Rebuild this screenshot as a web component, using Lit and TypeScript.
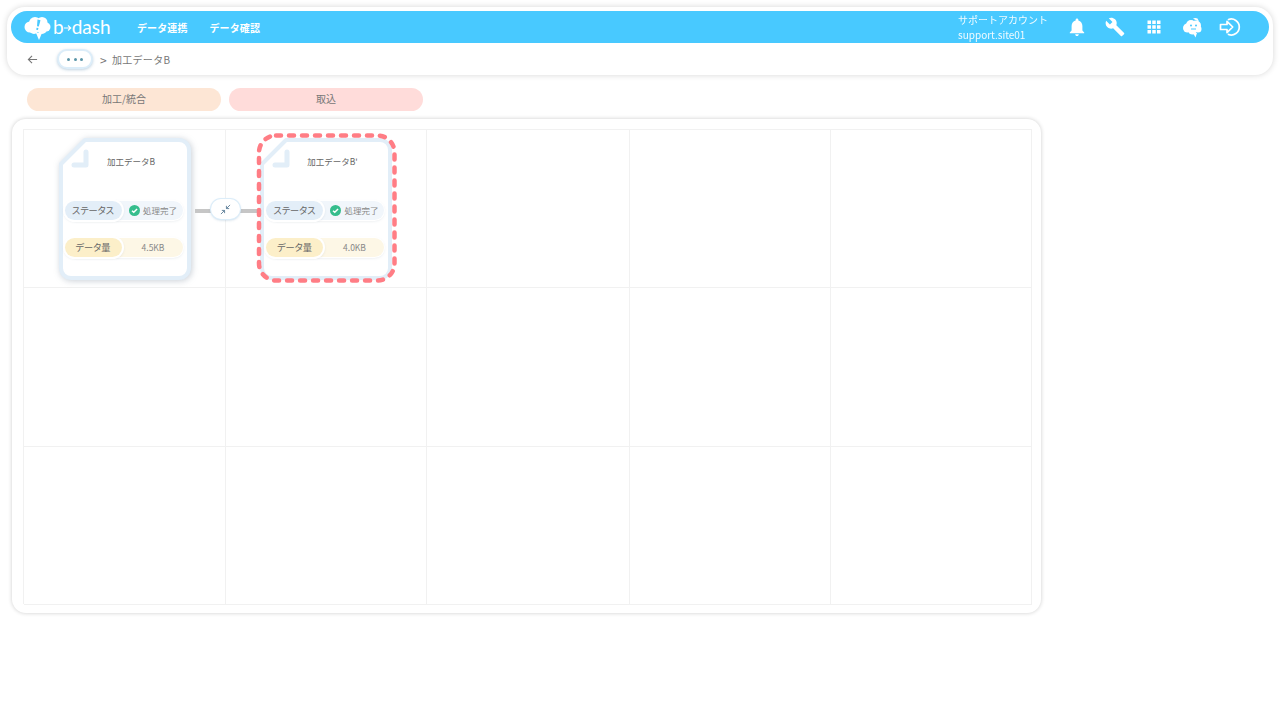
import { LitElement, html, css, svg } from "lit";
import { customElement } from "lit/decorators.js";

const shapePath = "M26 2 H120 A10 10 0 0 1 130 12 V130 A10 10 0 0 1 120 140 H12 A10 10 0 0 1 2 130 V26 Z";

@customElement("data-node")
class DataNode extends LitElement {
  static properties = { title: {}, size: {}, selected: { type: Boolean } };
  declare title: string;
  declare size: string;
  declare selected: boolean;
  static styles = css`
    :host { display: block; position: relative; width: 132px; height: 142px; }
    .wrap { height: 100%; }
    .shape { position: absolute; inset: 0; width: 132px; height: 142px; overflow: visible; filter: drop-shadow(1px 1px 3px rgba(90,110,130,.32)); }
    .selected .shape { filter: none; }
    .body { position: relative; height: 100%; box-sizing: border-box; padding: 17px 8px 0 5px; display: flex; flex-direction: column; }
    .name { font-size: 8.5px; line-height: 12px; color: #666; text-align: center; padding-left: 16px; height: 12px; }
    .row { display: flex; align-items: center; height: 19px; border-radius: 10px; background: #f1f6fb; box-shadow: 0 0 0 1px #fff, 0 1px 3px rgba(100,120,140,.2); font-size: 10px; color: #888; }
    .row.status { margin-top: 34px; }
    .row.amount { margin-top: 18px; background: #fdf7e6; }
    .label { width: 57px; margin-left: 1px; height: 19px; line-height: 18px; font-size: 9.2px; border-radius: 10px; text-align: center; background: #e3eef8; box-shadow: 0 0 0 2px #fff, 1px 1px 3px rgba(100,120,140,.3); color: #666; flex: none; font-feature-settings: "palt"; }
    .amount .label { background: #fcefc9; }
    .value { flex: 1; display: flex; align-items: center; justify-content: center; gap: 3px; font-size: 8.5px; padding-left: 2px; }
    .value svg { width: 11px; height: 11px; }
    .dash { position: absolute; left: -5px; top: -5px; width: 142px; height: 152px; overflow: visible; }
  `;
  render() {
    return html`<div class="wrap ${this.selected ? "selected" : ""}">
      <svg class="shape" viewBox="0 0 132 142">
        <path d=${shapePath} fill="#fff" stroke="#e2eef8" stroke-width="4" stroke-linejoin="round"></path>
        <path d="M27 14 V27 H15" fill="none" stroke="#e2eef8" stroke-width="5" stroke-linejoin="round" stroke-linecap="round"></path>
      </svg>
      <div class="body">
        <div class="name">${this.title}</div>
        <div class="row status">
          <div class="label">ステータス</div>
          <div class="value">
            <svg viewBox="0 0 12 12"><circle cx="6" cy="6" r="6" fill="#35bd8d"></circle><path d="M3.3 6.2 5.2 8 8.8 4.4" fill="none" stroke="#fff" stroke-width="1.6"></path></svg>
            処理完了
          </div>
        </div>
        <div class="row amount">
          <div class="label">データ量</div>
          <div class="value">${this.size}</div>
        </div>
      </div>
      ${this.selected ? html`<svg class="dash" viewBox="0 0 142 152"><rect x="4" y="2.5" width="135.5" height="145" rx="17" fill="none" stroke="#ff7d85" stroke-width="4.5" stroke-dasharray="5 8" stroke-linecap="round"></rect></svg>` : ""}
    </div>`;
  }
}

@customElement("app-root")
class AppRoot extends LitElement {
  static styles = css`
    :host { display: block; width: 1280px; height: 720px; background: #fff; overflow: hidden; font-family: "Noto Sans CJK JP", "Noto Sans", sans-serif; box-sizing: border-box; padding: 7px 7px 0; }
    .top { height: 68px; box-sizing: border-box; padding: 4px; border-radius: 18px; background: #fff; box-shadow: 0 0 6px rgba(0,0,0,.16); }
    .bar { height: 32px; border-radius: 16px; background: #48c9ff; display: flex; align-items: center; color: #fff; padding-left: 12px; }
    .logo { display: flex; align-items: center; width: 114px; flex: none; }
    .logo svg.mark { width: 28px; height: 24px; flex: none; margin-top: 1px; }
    .brand { font-family: "Lato", sans-serif; font-size: 19px; line-height: 22px; margin-left: 2px; display: flex; align-items: center; }
    .brand svg { width: 8px; height: 8px; margin: 2px 0 0; }
    nav { display: flex; gap: 22px; font-size: 10px; font-weight: 700; letter-spacing: .1px; }
    .spacer { flex: 1; }
    .user { width: 107px; font-size: 10px; line-height: 15px; opacity: .92; }
    .icons { display: flex; align-items: center; justify-content: space-between; width: 177px; margin-right: 27px; }
    .icons svg { width: 24px; height: 24px; fill: #fff; }
    .crumbs { display: flex; align-items: center; height: 28px; margin-top: 2px; padding-left: 16px; color: #777; font-size: 10px; letter-spacing: .3px; }
    .crumbs > svg { width: 11px; height: 11px; flex: none; }
    .more { width: 36px; height: 20px; box-sizing: border-box; margin: 0 7px 0 19px; border-radius: 10px; border: 2px solid #dcedf9; background: #fff; box-shadow: 0 1px 3px rgba(80,130,170,.35); display: flex; align-items: center; justify-content: center; gap: 3.5px; }
    .more i { width: 3px; height: 3px; border-radius: 50%; background: #5a95a8; }
    .sep { margin-right: 5px; font-size: 12px; }
    .tabs { display: flex; gap: 8px; margin: 13px 0 0 20px; }
    .tab { width: 194px; height: 23px; border-radius: 12px; background: #fde6d5; color: #777; font-size: 10px; line-height: 22px; text-align: center; }
    .tab.in { background: #ffdcda; }
    .canvas { position: relative; width: 1029px; height: 494px; box-sizing: border-box; margin: 8px 0 0 5px; padding: 10px 10px 9px 11px; border-radius: 14px; background: #fff; box-shadow: 0 0 4px rgba(0,0,0,.2); }
    .grid { display: grid; grid-template-columns: 202px 201px 203px 201px 201px; grid-template-rows: 158px 159px 158px; height: 475px; border: 1px solid #f1f1f1; border-width: 1px 0 0 1px; box-sizing: border-box; width: 1009px; }
    .cell { border: 1px solid #f1f1f1; border-width: 0 1px 1px 0; display: flex; align-items: center; justify-content: center; position: relative; }
    .link { position: absolute; left: 171px; top: 70px; width: 64px; height: 22px; }
    .link .line { position: absolute; left: 0; top: 9px; width: 64px; height: 4px; background: #c6c6c6; }
    .link .btn { position: absolute; left: 16px; top: -1px; width: 29px; height: 20px; box-sizing: border-box; border-radius: 10px; background: #fff; box-shadow: 0 0 0 1px #dcedf9, 0 1px 3px rgba(80,130,170,.4); display: flex; align-items: center; justify-content: center; }
    .link svg { width: 11px; height: 11px; }
  `;
  render() {
    const blue = "#48c9ff";
    const icons = [
      svg`<path transform="translate(1.200 1.200) scale(.9)" d="M12 22c1.100 0 2-.9 2-2h-4c0 1.100.89 2 2 2zm6-6v-5c0-3.070-1.640-5.640-4.500-6.320V4c0-.83-.67-1.500-1.500-1.500s-1.500.67-1.500 1.500v.68C7.630 5.360 6 7.920 6 11v5l-2 2v1h16v-1l-2-2z"></path>`,
      svg`<path transform="translate(1.800 1.800) scale(.85)" d="M22.700 19l-9.100-9.100c.9-2.300.4-5-1.500-6.900-2-2-5-2.400-7.400-1.300L9 6 6 9 1.600 4.700C.4 7.100.9 10.100 2.900 12.100c1.900 1.900 4.600 2.400 6.900 1.500l9.100 9.100c.4.4 1 .4 1.400 0l2.300-2.300c.5-.4.5-1.100.1-1.400z"></path>`,
      svg`<path d="M5.500 5.500h3.500v3.500H5.500zM10.250 5.500h3.500v3.500h-3.500zM15 5.500h3.500v3.500H15zM5.500 10.250h3.500v3.500H5.500zM10.250 10.250h3.500v3.500h-3.500zM15 10.250h3.500v3.500H15zM5.500 15h3.500v3.500H5.500zM10.250 15h3.500v3.500h-3.500zM15 15h3.500v3.500H15z"></path>`,
      svg`<circle cx="7.500" cy="13" r="4.500"></circle><circle cx="11" cy="10" r="5"></circle><circle cx="16" cy="10.500" r="5"></circle><circle cx="18" cy="14" r="3.500"></circle><circle cx="12.500" cy="15" r="4.500"></circle><path d="M13 18l4 0-1.500 4.500z"></path><path d="M13 3.500c1.500-1 3.500-.5 4.500 0l1.500 3-3.500-1.500z"></path><circle cx="11" cy="10.500" r="1" fill=${blue}></circle><circle cx="16" cy="10.500" r="1" fill=${blue}></circle><path d="M11 14h5" stroke=${blue} stroke-width="1" fill="none"></path>`,
      svg`<g fill="none" stroke="#fff" stroke-width="1.700" stroke-linejoin="round" stroke-linecap="round"><path d="M10.500 4.500a8 8 0 1 1 0 15"></path><path d="M2.500 9.500h6.500V6.300l5.700 5.700-5.700 5.700v-3.200H2.500z"></path></g>`,
    ];
    const cells = Array.from({ length: 15 }, (_, i) => i);
    return html`
      <div class="top">
        <div class="bar">
          <div class="logo">
            <svg class="mark" viewBox="0 0 28 24">
              <g fill="#fff">
                <circle cx="7" cy="11" r="5.500"></circle><circle cx="12" cy="7" r="6"></circle><circle cx="19" cy="6.500" r="5.500"></circle><circle cx="23" cy="11" r="4.500"></circle><circle cx="19" cy="13" r="5"></circle><circle cx="11" cy="13" r="5"></circle>
                <path d="M13 17h6l-3 7z"></path>
              </g>
              <path fill=${blue} d="M14.500 3.500 17.500 4.200 15.800 10.500 14 10.200zM13.600 11.700 15.400 12 15 14 13.200 13.700z"></path>
            </svg>
            <span class="brand">b<svg viewBox="0 0 8 8"><path d="M0 4h6M4 1.500 6.800 4 4 6.500" fill="none" stroke="#fff" stroke-width="1.100"></path></svg>dash</span>
          </div>
          <nav><span>データ連携</span><span>データ確認</span></nav>
          <div class="spacer"></div>
          <div class="user">サポートアカウント<br />support.site01</div>
          <div class="icons">
            ${icons.map((p) => html`<svg viewBox="0 0 24 24">${p}</svg>`)}
          </div>
        </div>
        <div class="crumbs">
          <svg viewBox="0 0 12 12"><path d="M11 6H1.500M5.500 2 1.500 6l4 4" fill="none" stroke="#777" stroke-width="1.200"></path></svg>
          <div class="more"><i></i><i></i><i></i></div>
          <span class="sep">&gt;</span>
          <span>加工データB</span>
        </div>
      </div>
      <div class="tabs"><div class="tab">加工/統合</div><div class="tab in">取込</div></div>
      <div class="canvas">
        <div class="grid">
          ${cells.map((i) => html`<div class="cell">
            ${i === 0 ? html`<data-node title="加工データB" size="4.5KB"></data-node>
              <div class="link"><div class="line"></div><div class="btn"><svg viewBox="0 0 12 12"><path d="M1 11 5 7M5 10V7H2M11 1 7 5M7 2v3h3" fill="none" stroke="#5d7f98" stroke-width="1"></path></svg></div></div>` : ""}
            ${i === 1 ? html`<data-node title="加工データB'" size="4.0KB" selected></data-node>` : ""}
          </div>`)}
        </div>
      </div>
    `;
  }
}
